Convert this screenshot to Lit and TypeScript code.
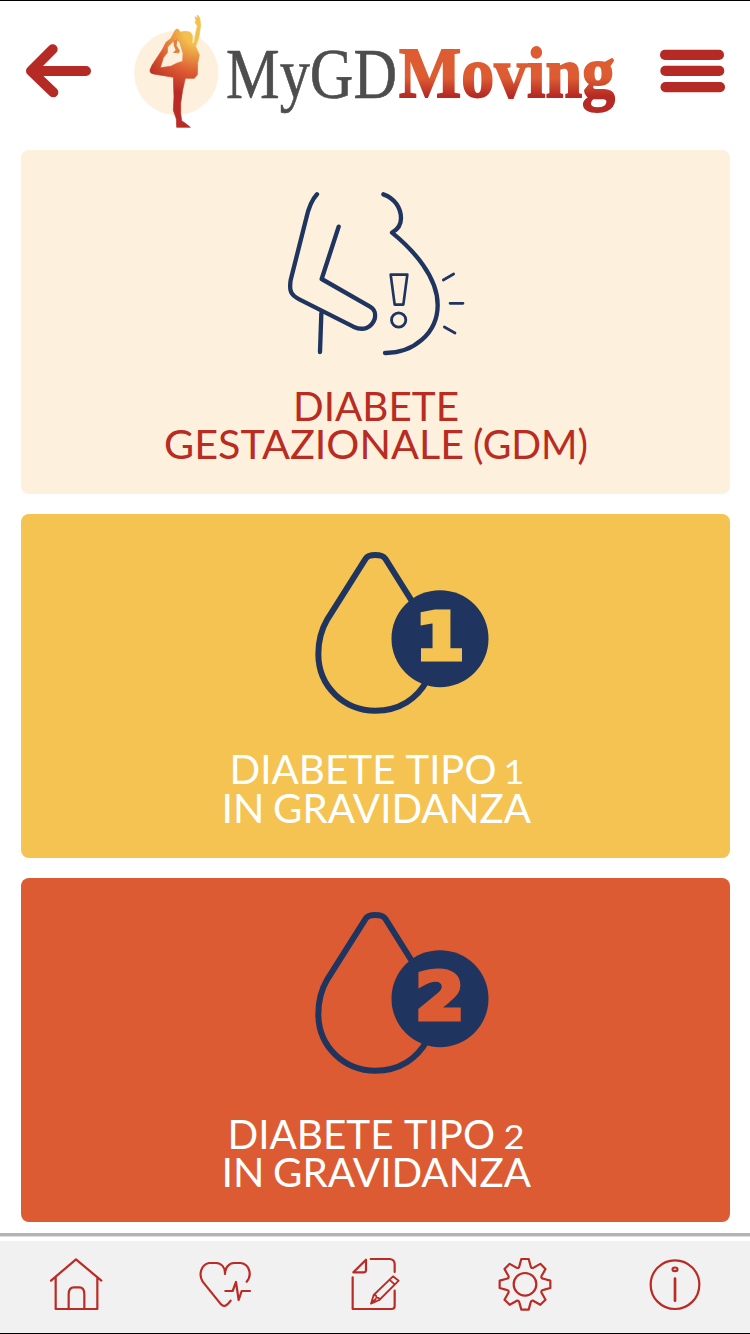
import { LitElement, html, css, svg } from "lit";
import { customElement } from "lit/decorators.js";

interface Word {
  text: string;
  x: number;
  y: number;
  width: number;
  size?: number;
}

interface Card {
  tone: string;
  iconBox: string;
  icon: unknown;
  words: Word[];
}

const belly = svg`
  <g transform="translate(270 180) scale(0.33333)" fill="none" stroke="#1f3560" stroke-width="13" stroke-linecap="round" stroke-linejoin="round">
    <path d="M141 43C120 65 113 95 108 118L62 300C57 333 62 345 88 358L250 440C280 454 304 444 314 417C318 398 314 388 300 380L155 297L206 140"/>
    <path d="M154 400L150 516"/>
    <path d="M340 43C375 55 393 85 393 115C393 135 385 148 366 158C430 210 503 290 503 375C503 460 430 520 345 519"/>
    <path d="M362 284H412L400 374H374Z" stroke-width="8"/>
    <circle cx="386" cy="420" r="21.5" stroke-width="8.500"/>
    <path d="M520 300L551 282M540 370H579M523 441L555 459" stroke-width="8"/>
  </g>`;

const drop = (digit: string, tone: string) => svg`
  <g transform="translate(300 540) scale(0.33333)">
    <path d="M340 190L256 56Q248 45 226 45Q204 45 197 56L82 238C62 272 55 300 55 342C55 440 133 512 226 512C300 512 352 474 382 420" fill="none" stroke="#1f3560" stroke-width="18"/>
    <circle cx="420" cy="296" r="145.5" fill="#1f3560"/>
    <text class="digit ${tone}" transform="translate(419 358) scale(1.08 1)" text-anchor="middle">${digit}</text>
  </g>`;

const cards: Card[] = [
  {
    tone: "cream",
    iconBox: "21 150 709 225",
    icon: belly,
    words: [
      { text: "DIABETE", x: 272, y: 45.5, width: 166 },
      { text: "GESTAZIONALE", x: 143, y: 84, width: 300 },
      { text: "(GDM)", x: 452, y: 84, width: 115 },
    ],
  },
  {
    tone: "yellow",
    iconBox: "21 514 709 225",
    icon: drop("1", "yellow"),
    words: [
      { text: "DIABETE", x: 208.5, y: 45, width: 166 },
      { text: "TIPO", x: 384.5, y: 45, width: 91 },
      { text: "1", x: 482.5, y: 45, width: 21, size: 32 },
      { text: "IN", x: 200.5, y: 83.5, width: 43 },
      { text: "GRAVIDANZA", x: 252, y: 83.5, width: 258 },
    ],
  },
  {
    tone: "orange",
    iconBox: "21 518 709 225",
    icon: drop("2", "orange"),
    words: [
      { text: "DIABETE", x: 206.5, y: 45.5, width: 166 },
      { text: "TIPO", x: 383, y: 45.5, width: 91 },
      { text: "2", x: 482.5, y: 45.5, width: 21, size: 32 },
      { text: "IN", x: 200.5, y: 84, width: 43 },
      { text: "GRAVIDANZA", x: 252, y: 84, width: 258 },
    ],
  },
];

function gearPath(): string {
  const parts: string[] = [];
  const at = (x: number, y: number, a: number) =>
    `${(585 + x * Math.cos(a) - y * Math.sin(a)).toFixed(1)} ${(178 + x * Math.sin(a) + y * Math.cos(a)).toFixed(1)}`;
  for (let i = 0; i < 8; i++) {
    const a = (i * Math.PI) / 4;
    parts.push(`${i ? "L" : "M"}${at(-16, -58, a)}L${at(-11, -76, a)}L${at(11, -76, a)}L${at(16, -58, a)}`);
    parts.push(`Q${at(0, -47, a + Math.PI / 8)} ${at(-16, -58, a + Math.PI / 4)}`);
  }
  return parts.join("") + "Z";
}

const navItems = [
  {
    label: "Home",
    box: "0 1241 150 92",
    art: svg`<g transform="translate(0 1200) scale(0.33333)">
      <path d="M153 242L228 178L304 242M167 231V327H292V231M206 327V283C206 268 212 262 222 262H238C248 262 253 268 253 283V327"/></g>`,
  },
  {
    label: "Salute",
    box: "150 1241 150 92",
    art: svg`<g transform="translate(0 1200) scale(0.33333)">
      <path d="M740 245C757 226 749 192 722 189H702C686 190 675 203 675 222C675 203 665 190 649 189H627C603 194 595 224 608 245L663 313C671 322 680 319 692 302"/>
      <path d="M676 273H698L708 246L716 300L725 273H750"/></g>`,
  },
  {
    label: "Diario",
    box: "300 1241 150 92",
    art: svg`<g transform="translate(330 1225) scale(0.33333)">
      <path d="M122 102H180Q194 104 194 118V141M68 157V252H185Q194 252 194 243V197M70 142L108 104V136Q108 142 101 142Z"/>
      <path d="M123 236L131 210L189 154L206 167L148 225ZM178 164L194 178M131 210Q141 210 139 218Q148 217 148 225M125 234L137 222" stroke-width="5.500"/></g>`,
  },
  {
    label: "Impostazioni",
    box: "450 1241 150 92",
    art: svg`<g transform="translate(330 1225) scale(0.33333)">
      <path d=${gearPath()}/><circle cx="585" cy="178" r="34"/></g>`,
  },
  {
    label: "Info",
    box: "600 1241 150 92",
    art: svg`<g transform="translate(560 1200) scale(0.33333)">
      <circle cx="345" cy="254" r="73"/><ellipse cx="345" cy="208" rx="7.500" ry="5.500"/>
      <path d="M345 236V302" stroke-width="8"/></g>`,
  },
];

@customElement("app-root")
export class AppRoot extends LitElement {
  static styles = css`
    :host {
      display: flex;
      flex-direction: column;
      box-sizing: border-box;
      width: 750px;
      height: 1334px;
      border-top: 1px solid #000;
      border-bottom: 1px solid #000;
      background: #fff;
      overflow: hidden;
    }
    svg {
      display: block;
    }
    button {
      display: block;
      padding: 0;
      border: 0;
      background: none;
    }
    .header {
      display: flex;
      height: 149px;
      flex: none;
    }
    .cards {
      display: flex;
      flex-direction: column;
      gap: 20px;
      padding: 0 20px 0 21px;
      flex: none;
    }
    .card {
      height: 344px;
      border-radius: 8px;
    }
    .card.cream {
      background: #fdf0dd;
      fill: #b92c22;
    }
    .card.yellow {
      background: #f5c351;
      fill: #fff;
    }
    .card.orange {
      background: #dc5b32;
      fill: #fff;
    }
    .label {
      font-family: Lato, sans-serif;
      font-size: 40px;
    }
    .label .small {
      font-size: 32px;
    }
    .digit {
      font: bold 194px "DejaVu Sans", sans-serif;
      stroke-width: 15px;
    }
    .digit.yellow {
      fill: #f5c351;
      stroke: #f5c351;
    }
    .digit.orange {
      fill: #dc5b32;
      stroke: #dc5b32;
    }
    .brand {
      font-family: "Liberation Serif", serif;
      font-size: 72px;
    }
    .brand-bold {
      font-weight: bold;
    }
    .rule {
      height: 3px;
      margin-top: 11px;
      background: #b3b3b3;
      border-bottom: 1px solid #dcdcdc;
      flex: none;
    }
    .nav {
      display: flex;
      height: 92px;
      margin-top: auto;
      background: #f1f1f1;
      fill: none;
      stroke: #bb2b25;
      stroke-width: 6.6px;
      stroke-linejoin: round;
      stroke-linecap: round;
      flex: none;
    }
  `;

  render() {
    return html`
      <header class="header">
        <button aria-label="Indietro">
          <svg width="120" height="149" viewBox="0 1 120 149">
            <path transform="scale(0.33333)" d="M258 213H95M158 148L93 213L160 277" fill="none" stroke="#b52a24" stroke-width="30" stroke-linecap="round" stroke-linejoin="round"/>
          </svg>
        </button>
        <svg width="520" height="149" viewBox="120 1 520 149">
          <defs>
            <radialGradient id="figure" gradientUnits="userSpaceOnUse" cx="590" cy="95" r="190">
              <stop offset="0.2" stop-color="#f3c04d"/>
              <stop offset="0.64" stop-color="#dd5d33"/>
              <stop offset="1" stop-color="#b92c25"/>
            </radialGradient>
            <linearGradient id="word" gradientUnits="userSpaceOnUse" x1="0" y1="78" x2="0" y2="96">
              <stop offset="0" stop-color="#dd5c32"/>
              <stop offset="1" stop-color="#b52a24"/>
            </linearGradient>
          </defs>
          <g transform="scale(0.33333)">
            <circle cx="529" cy="219" r="126.500" fill="#fdf0dc"/>
            <path fill="url(#figure)" stroke="url(#figure)" stroke-width="2" stroke-linejoin="round" fill-rule="evenodd" d="M592 45L599 53L602 75L597 110L587 139L598 165L593 190L592 224L583 235H556L548 270L542 310V340L545 362L560 373L571 382H530L529 357L520 331L522 290L520 232L461 222Q449 220 450 210L456 196L488 147L498 127L512 116L526 90Q534 82 541 97Q557 90 571 97Q579 105 577 117L576 132L583 126L588 95L592 78L585 67L588 62L585 50L592 55ZM526 118L503 141L502 158L490 173L481 203L512 199Q530 188 548 184L549 160L539 127Z"/>
            <path fill="#e2803e" d="M520 122L532 116L530 137L540 152L536 160L518 158L527 150L522 139Z"/>
          </g>
          <text class="brand" x="226" y="97.500" fill="#4d4d4d" stroke="#4d4d4d" stroke-width="0.600" textLength="171" lengthAdjust="spacingAndGlyphs">MyGD</text>
          <text class="brand brand-bold" x="399" y="97" fill="url(#word)" stroke="url(#word)" stroke-width="1.800" textLength="216" lengthAdjust="spacingAndGlyphs">Moving</text>
        </svg>
        <button aria-label="Menu">
          <svg width="110" height="149" viewBox="640 1 110 149" fill="#b52a24">
            <rect x="660" y="49.700" width="64" height="10.300" rx="5"/>
            <rect x="660.300" y="65.700" width="64" height="10.300" rx="5"/>
            <rect x="660.500" y="82" width="64.500" height="10.300" rx="5"/>
          </svg>
        </button>
      </header>
      <main class="cards">
        ${cards.map(
          (card) => html`
            <section class="card ${card.tone}">
              <svg width="709" height="225" viewBox=${card.iconBox}>${card.icon}</svg>
              <svg class="label" width="709" height="119" viewBox="0 0 709 119">
                ${card.words.map(
                  (w) => svg`<text class=${w.size ? "small" : "word"} x=${w.x} y=${w.y} textLength=${w.width} lengthAdjust="spacingAndGlyphs">${w.text}</text>`
                )}
              </svg>
            </section>
          `
        )}
      </main>
      <div class="rule"></div>
      <nav class="nav">
        ${navItems.map(
          (item) => html`<button aria-label=${item.label}>
            <svg width="150" height="92" viewBox=${item.box}>${item.art}</svg>
          </button>`
        )}
      </nav>
    `;
  }
}
